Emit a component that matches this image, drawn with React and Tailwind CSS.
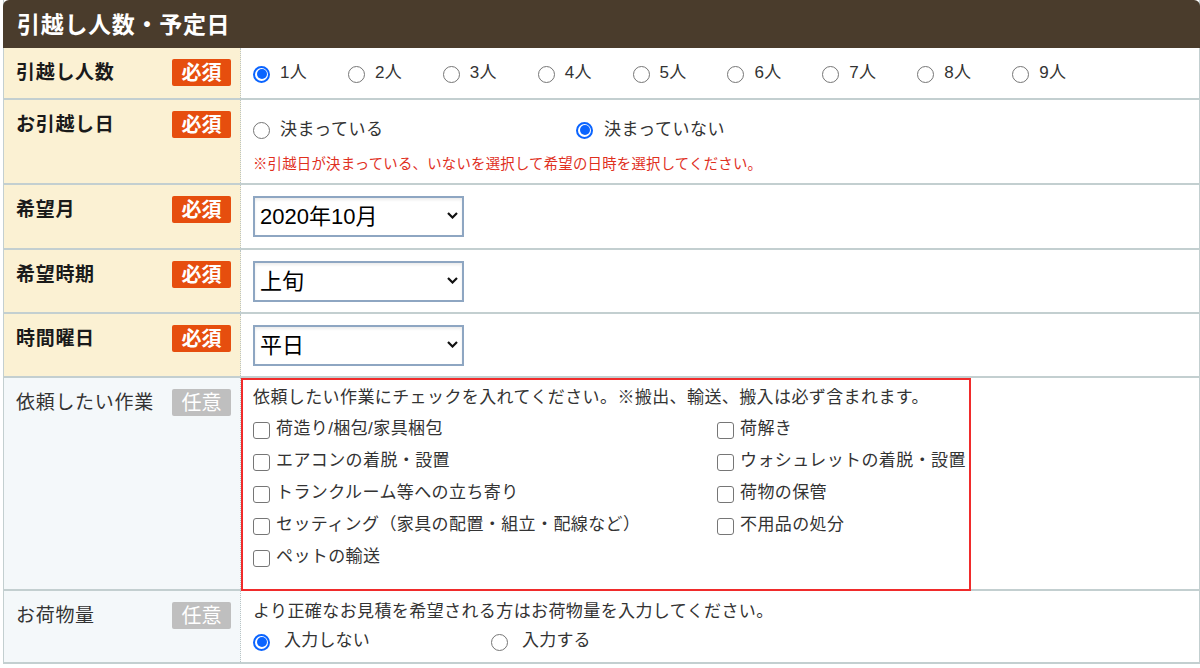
import React from "react";

const font = { fontFamily: '"Liberation Sans", "Noto Sans CJK JP", sans-serif' };

function Radio({ checked }) {
  return checked ? (
    <span className="w-[17px] h-[17px] shrink-0 rounded-full border-[2px] border-[#0a64ff] bg-white flex items-center justify-center">
      <span className="w-[10px] h-[10px] rounded-full bg-[#0a64ff]" />
    </span>
  ) : (
    <span className="w-[17px] h-[17px] shrink-0 rounded-full border border-[#767676] bg-white" />
  );
}

function Check({ label }) {
  return (
    <div className="flex items-center h-[32px] text-[17px] tracking-[0.4px] text-[#333] whitespace-nowrap">
      <span className="w-[17px] h-[17px] shrink-0 rounded-[3px] border border-[#767676] bg-white mr-[6px] mt-[2px]" />
      <span>{label}</span>
    </div>
  );
}

function Badge({ required }) {
  return (
    <span
      className={
        "w-[59px] h-[27px] shrink-0 rounded-[2px] flex items-center justify-center text-white text-[20px] leading-none font-bold " +
        (required ? "bg-[#e64e0e]" : "bg-[#bfbfbf] font-normal")
      }
    >
      {required ? "必須" : "任意"}
    </span>
  );
}

function Row({ label, required, height, children }) {
  return (
    <div className="flex border-b-2 border-[#c3cfd0]" style={{ height }}>
      <div
        className={
          "w-[237px] shrink-0 flex justify-between pl-[12px] pr-[9px] pt-[11px] border-r border-dotted border-[#b9c4c4] " +
          (required ? "bg-[#fbf1d3]" : "bg-[#f4f8fa]")
        }
      >
        <span
          className={
            "text-[19px] tracking-[0.7px] leading-[27px] " +
            (required ? "font-bold text-[#1a1a1a]" : "text-[#333]")
          }
        >
          {label}
        </span>
        <Badge required={required} />
      </div>
      <div className="flex-1 min-w-0">{children}</div>
    </div>
  );
}

function MonthSelect({ value }) {
  return (
    <div className="pl-[12px] pt-[11px]">
      <div className="relative w-[211px] h-[41px]">
        <select
          defaultValue={value}
          className="appearance-none w-full h-full pl-[5px] bg-white border-2 border-[#8ea6c2] text-[22px] text-black shadow-[inset_0_2px_3px_rgba(0,0,0,0.08)]"
        >
          <option>{value}</option>
        </select>
        <svg className="absolute right-[6px] top-[16px] w-[11px] h-[7px]" viewBox="0 0 11 7" fill="none">
          <path d="M1 1l4.5 4.5L10 1" stroke="#111" strokeWidth="2.2" />
        </svg>
      </div>
    </div>
  );
}

const tasks = [
  "荷造り/梱包/家具梱包",
  "荷解き",
  "エアコンの着脱・設置",
  "ウォシュレットの着脱・設置",
  "トランクルーム等への立ち寄り",
  "荷物の保管",
  "セッティング（家具の配置・組立・配線など）",
  "不用品の処分",
  "ペットの輸送",
];

export default function App() {
  return (
    <div className="w-[1200px] h-[668px] bg-white overflow-hidden" style={font}>
      <div className="ml-[3px] w-[1197px] border-x border-[#c3cfd0]">
        {/* 見出し */}
        <div className="-mx-[1px] h-[48px] bg-[#4a3c2c] rounded-t-[6px] flex items-center pl-[14px] pt-[3px] text-[23px] tracking-[0.7px] font-bold text-white">
          引越し人数・予定日
        </div>

        <Row label="引越し人数" required height={52}>
          <div className="flex items-center h-full pl-[12px] pt-[2px]">
            {[1, 2, 3, 4, 5, 6, 7, 8, 9].map((n) => (
              <div key={n} className="w-[94.9px] flex items-center text-[17px] text-[#333] tracking-[0.3px]">
                <Radio checked={n === 1} />
                <span className="ml-[10px] -mt-[2px]">{n}人</span>
              </div>
            ))}
          </div>
        </Row>

        <Row label="お引越し日" required height={85}>
          <div className="pl-[12px] pt-[18px]">
            <div className="flex items-center h-[24px] text-[17px] tracking-[0.5px] text-[#333]">
              <div className="w-[323px] flex items-center">
                <Radio />
                <span className="ml-[10px]">決まっている</span>
              </div>
              <Radio checked />
              <span className="ml-[11px]">決まっていない</span>
            </div>
            <p className="mt-[12px] text-[14.4px] tracking-[0.23px] text-[#e0301e] whitespace-nowrap">
              ※引越日が決まっている、いないを選択して希望の日時を選択してください。
            </p>
          </div>
        </Row>

        <Row label="希望月" required height={65}>
          <MonthSelect value="2020年10月" />
        </Row>
        <Row label="希望時期" required height={64}>
          <MonthSelect value="上旬" />
        </Row>
        <Row label="時間曜日" required height={64}>
          <MonthSelect value="平日" />
        </Row>

        <Row label="依頼したい作業" height={213}>
          <div className="w-[730px] h-[213px] border-2 border-[#f02b2b] pl-[10px] pt-[5px]">
            <p className="text-[17px] tracking-[0.4px] text-[#333] leading-[26px] whitespace-nowrap">
              依頼したい作業にチェックを入れてください。※搬出、輸送、搬入は必ず含まれます。
            </p>
            <div className="grid grid-cols-[464px_1fr] mt-[2px]">
              {tasks.map((t) => (
                <Check key={t} label={t} />
              ))}
            </div>
          </div>
        </Row>

        <Row label="お荷物量" height={73}>
          <div className="pl-[12px] pt-[8px] text-[#333]">
            <p className="text-[17px] tracking-[0.4px] leading-[26px] whitespace-nowrap">
              より正確なお見積を希望される方はお荷物量を入力してください。
            </p>
            <div className="flex items-center h-[30px] mt-[2px] text-[17px] tracking-[0.2px]">
              <div className="w-[238px] flex items-center">
                <Radio checked />
                <span className="ml-[14px] -mt-[2px]">入力しない</span>
              </div>
              <Radio />
              <span className="ml-[14px] -mt-[2px]">入力する</span>
            </div>
          </div>
        </Row>
      </div>
    </div>
  );
}
